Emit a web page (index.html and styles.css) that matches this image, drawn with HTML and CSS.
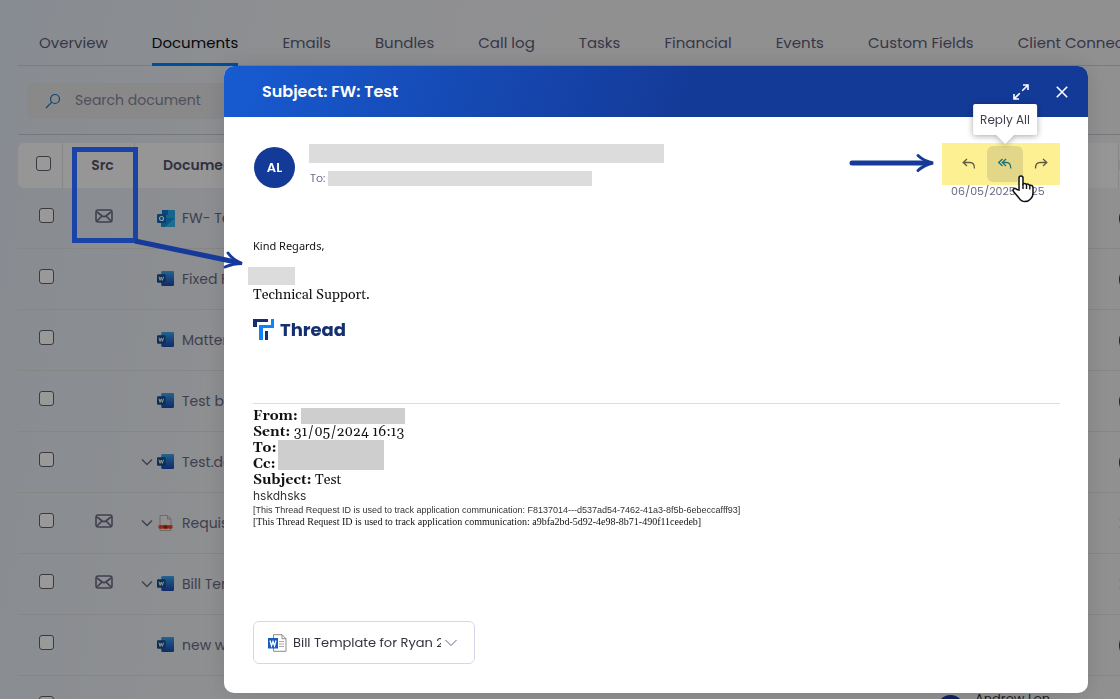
FILE: index.html
```html
<!DOCTYPE html>
<html lang="en">
<head>
    <meta charset="UTF-8">
    <meta name="viewport" content="width=device-width, initial-scale=1.0">
    <title>Matter Documents</title>
    <link rel="stylesheet" href="styles.css">
</head>
<body>
    <svg class="sprite" aria-hidden="true">
        <defs>
            <linearGradient id="word-fill" x1="0" y1="0" x2="0" y2="1">
                <stop offset="0%" stop-color="#41a5ee"></stop>
                <stop offset="40%" stop-color="#2b7cd3"></stop>
                <stop offset="100%" stop-color="#1b48b0"></stop>
            </linearGradient>
            <symbol id="mail" viewBox="0 0 18 14">
                <g fill="none" stroke="currentColor" stroke-width="1.6" stroke-linejoin="round">
                    <rect x="1" y="1" width="16" height="12" rx="2.2"></rect>
                    <path d="M2 3L7.200 7Q9 8.200 10.800 7L16 3M2.200 11.800L6.600 7.400M15.800 11.800L11.400 7.400"></path>
                </g>
            </symbol>
            <symbol id="word" viewBox="0 0 16 15">
                <rect x="4" y="0" width="12" height="14" rx="1" fill="url(#word-fill)"></rect>
                <rect x="0" y="3" width="8" height="8" rx="1" fill="#0f4f8f"></rect>
                <path d="M1.800 5.200L2.900 8.800L4 5.600L5.100 8.800L6.200 5.200" fill="none" stroke="#fff" stroke-width="0.900"></path>
            </symbol>
            <symbol id="outlook" viewBox="0 0 18 17">
                <rect x="5" y="0" width="13" height="10" rx="1" fill="#28a8ea"></rect>
                <rect x="5" y="0" width="6" height="5" fill="#0f78d4"></rect>
                <path d="M4 8L18 8V16Q18 17 17 17H5Q4 17 4 16Z" fill="#1490df"></path>
                <path d="M18 8L8 17H17Q18 17 18 16Z" fill="#35b8f1"></path>
                <rect x="0" y="4" width="9" height="9" rx="1" fill="#0f6cbd"></rect>
                <circle cx="4.500" cy="8.500" r="2" fill="none" stroke="#fff" stroke-width="1.200"></circle>
            </symbol>
            <symbol id="pdf" viewBox="0 0 14 16">
                <path d="M1.500 0.500H9L12.500 4V15.500H1.500Z" fill="#f2f0ee" stroke="#b5b2b0"></path>
                <path d="M9 0.500V4H12.500" fill="none" stroke="#b5b2b0"></path>
                <path d="M0 10.500Q2 9.500 4 10.300Q7 9 10 10.300Q12 9.500 14 10.500V13Q12 14.500 10 13.500Q7 15 4 13.500Q2 14.500 0 13Z" fill="#ee4423"></path>
                <ellipse cx="7" cy="12" rx="2" ry="1" fill="#8f2010"></ellipse>
            </symbol>
            <symbol id="chevron" viewBox="0 0 12 8">
                <path d="M1 1.500L6 6.500L11 1.500" fill="none" stroke="currentColor" stroke-width="1.500"></path>
            </symbol>
        </defs>
    </svg>

    <div class="page">
        <nav class="tabs">
            <a href="#">Overview</a>
            <a href="#" class="active">Documents</a>
            <a href="#">Emails</a>
            <a href="#">Bundles</a>
            <a href="#">Call log</a>
            <a href="#">Tasks</a>
            <a href="#">Financial</a>
            <a href="#">Events</a>
            <a href="#">Custom Fields</a>
            <a href="#">Client Connect</a>
        </nav>
        <div class="toolbar">
            <label class="search">
                <svg width="16" height="16" viewBox="0 0 16 16" fill="none" stroke="#0b79c8" stroke-width="1.200">
                    <circle cx="10" cy="6" r="4.500"></circle>
                    <path d="M6.800 9.200L1 15"></path>
                </svg>
                <input type="text" placeholder="Search document" aria-label="Search document">
            </label>
        </div>
        <div class="table-wrap">
            <table>
                <colgroup>
                    <col class="col-check">
                    <col class="col-src">
                    <col class="col-doc">
                    <col class="col-owner">
                    <col class="col-modified">
                </colgroup>
                <thead>
                    <tr>
                        <th><input type="checkbox" aria-label="Select all"></th>
                        <th class="src">Src</th>
                        <th class="doc-head">Document</th>
                        <th></th>
                        <th>Modified</th>
                    </tr>
                </thead>
                <tbody>
                    <tr>
                        <td><input type="checkbox" aria-label="Select FW- Test"></td>
                        <td class="src"><svg class="mail"><use href="#mail"></use></svg></td>
                        <td><div class="doc"><svg class="file outlook"><use href="#outlook"></use></svg>FW- Test</div></td>
                        <td></td>
                        <td><span class="user"></span></td>
                    </tr>
                    <tr>
                        <td><input type="checkbox" aria-label="Select Fixed Fee"></td>
                        <td></td>
                        <td><div class="doc"><svg class="file"><use href="#word"></use></svg>Fixed Fee</div></td>
                        <td></td>
                        <td><span class="user"></span></td>
                    </tr>
                    <tr>
                        <td><input type="checkbox" aria-label="Select Matter"></td>
                        <td></td>
                        <td><div class="doc"><svg class="file"><use href="#word"></use></svg>Matter</div></td>
                        <td></td>
                        <td><span class="user"></span></td>
                    </tr>
                    <tr>
                        <td><input type="checkbox" aria-label="Select Test bill"></td>
                        <td></td>
                        <td><div class="doc"><svg class="file"><use href="#word"></use></svg>Test bill</div></td>
                        <td></td>
                        <td><span class="user"></span></td>
                    </tr>
                    <tr>
                        <td><input type="checkbox" aria-label="Select Test.docx"></td>
                        <td></td>
                        <td><div class="doc"><svg class="chevron"><use href="#chevron"></use></svg><svg class="file"><use href="#word"></use></svg>Test.docx</div></td>
                        <td></td>
                        <td><span class="user"></span></td>
                    </tr>
                    <tr>
                        <td><input type="checkbox" aria-label="Select Requisition"></td>
                        <td class="src"><svg class="mail"><use href="#mail"></use></svg></td>
                        <td><div class="doc"><svg class="chevron"><use href="#chevron"></use></svg><svg class="file"><use href="#pdf"></use></svg>Requisition</div></td>
                        <td></td>
                        <td>2</td>
                    </tr>
                    <tr>
                        <td><input type="checkbox" aria-label="Select Bill Template"></td>
                        <td class="src"><svg class="mail"><use href="#mail"></use></svg></td>
                        <td><div class="doc"><svg class="chevron"><use href="#chevron"></use></svg><svg class="file"><use href="#word"></use></svg>Bill Template</div></td>
                        <td></td>
                        <td>2</td>
                    </tr>
                    <tr>
                        <td><input type="checkbox" aria-label="Select new word"></td>
                        <td></td>
                        <td><div class="doc"><svg class="file"><use href="#word"></use></svg>new word</div></td>
                        <td></td>
                        <td><span class="user"></span></td>
                    </tr>
                    <tr>
                        <td><input type="checkbox" aria-label="Select document"></td>
                        <td></td>
                        <td></td>
                        <td><div class="owner"><span class="user"></span><span class="owner-name">Andrew Lon</span></div></td>
                        <td></td>
                    </tr>
                </tbody>
            </table>
        </div>
    </div>

    <div class="overlay">
        <section class="modal" role="dialog" aria-labelledby="subject">
            <header class="modal-head">
                <h1 id="subject">Subject: FW: Test</h1>
                <button class="icon-btn" aria-label="Expand">
                    <svg width="16" height="16" viewBox="0 0 16 16" fill="none" stroke="#fff" stroke-width="1.600">
                        <path d="M10 1H15V6M15 1L9.200 6.800M6 15H1V10M1 15L6.800 9.200"></path>
                    </svg>
                </button>
                <button class="icon-btn" aria-label="Close">
                    <svg width="12" height="12" viewBox="0 0 12 12" fill="none" stroke="#fff" stroke-width="1.600">
                        <path d="M0.800 0.800L11.200 11.200M11.200 0.800L0.800 11.200"></path>
                    </svg>
                </button>
            </header>
            <div class="modal-body">
                <div class="mail-head">
                    <div class="avatar">AL</div>
                    <div class="people">
                        <div class="redact from-bar"></div>
                        <div class="to">To: <span class="redact to-bar"></span></div>
                    </div>
                    <div class="mail-side">
                        <svg class="point-arrow" width="86" height="20" viewBox="0 0 86 20" fill="none" stroke="#163a99" stroke-linecap="round">
                            <path d="M3 10H78" stroke-width="5"></path>
                            <path d="M69 2.500Q74 7.500 84 10Q74 12.500 69 17.500" stroke-width="3"></path>
                        </svg>
                        <div class="actions">
                            <button aria-label="Reply">
                                <svg width="14" height="12" viewBox="0 0 14 12" fill="none" stroke="#5f5a45" stroke-width="1.300">
                                    <path d="M5 1L1.200 4.500L5 8M1.200 4.500H8Q12.500 4.500 12.500 10.500"></path>
                                </svg>
                            </button>
                            <button class="hovered" aria-label="Reply All" aria-describedby="reply-all-tip">
                                <svg width="14" height="12" viewBox="0 0 14 12" fill="none" stroke="#1d7476" stroke-width="1.300">
                                    <path d="M4.500 1L0.800 4.500L4.500 8M8 1L4.300 4.500L8 8M4.300 4.500H8.500Q12.800 4.500 12.800 10.500"></path>
                                </svg>
                                <span class="tooltip" id="reply-all-tip" role="tooltip">Reply All</span>
                            </button>
                            <button aria-label="Forward">
                                <svg width="14" height="12" viewBox="0 0 14 12" fill="none" stroke="#5f5a45" stroke-width="1.300">
                                    <path d="M9 1L12.800 4.500L9 8M12.800 4.500H6Q1.500 4.500 1.500 10.500"></path>
                                </svg>
                            </button>
                        </div>
                        <time>06/05/2025 14:25</time>
                        <svg class="cursor" width="22" height="28" viewBox="0 0 22 28">
                            <path d="M7 15V3Q7 1 9 1Q11 1 11 3V9Q12.500 8 14.500 9.300Q16.300 8.600 17.500 10.300Q21 9.700 21 13V18Q21 22 18.500 24Q16.500 26.500 13 26.500Q9 26.500 7 23L1.500 16.500Q0.500 14.500 2 13.700Q3.500 13 5 14.500Z" fill="#fff" stroke="#111" stroke-width="1.500"></path>
                            <path d="M11 9V14M14.500 9.500V14M17.800 10.500V14.500" fill="none" stroke="#111" stroke-width="1.400"></path>
                        </svg>
                    </div>
                </div>

                <div class="message">
                    <p class="regards">Kind Regards,</p>
                    <div class="redact name-bar"></div>
                    <p class="role">Technical Support.</p>
                    <div class="logo">
                        <svg width="21" height="21" viewBox="0 0 21 21">
                            <path d="M0 0H15V3H4V8H0Z" fill="#16306f"></path>
                            <path d="M18 0H21V9H10V21H6V6H18Z" fill="#0a84ff"></path>
                            <path d="M12 12H15V21H12Z" fill="#16306f"></path>
                        </svg>
                        <span>Thread</span>
                    </div>
                    <hr>
                    <div class="quoted">
                        <div><b>From:</b> <span class="redact quoted-from"></span></div>
                        <div><b>Sent:</b> 31/05/2024 16:13</div>
                        <div class="recipients">
                            <div><b>To:</b><br><b>Cc:</b></div>
                            <span class="redact quoted-to"></span>
                        </div>
                        <div><b>Subject:</b> Test</div>
                        <div class="note">hskdhsks</div>
                        <div class="track">[This Thread Request ID is used to track application communication: F8137014---d537ad54-7462-41a3-8f5b-6ebeccafff93]</div>
                        <div class="track-serif">[This Thread Request ID is used to track application communication: a9bfa2bd-5d92-4e98-8b71-490f11ceedeb]</div>
                    </div>
                </div>

                <button class="attachment">
                    <svg width="19" height="18" viewBox="0 0 19 18">
                        <path d="M5.500 0.700H14L18 4.700V17.300H5.500Z" fill="#fff" stroke="#8c8c8c"></path>
                        <path d="M14 0.700V4.700H18" fill="none" stroke="#8c8c8c"></path>
                        <path d="M11 7.500H16M11 10H16M11 12.500H16" stroke="#a9a9a9"></path>
                        <rect x="0" y="4" width="10" height="10.500" fill="#185abd"></rect>
                        <path d="M2 6.500L3.500 11.800L5 7.500L6.500 11.800L8 6.500" fill="none" stroke="#fff" stroke-width="1.300"></path>
                    </svg>
                    <span class="attachment-name">Bill Template for Ryan 2024.docx</span>
                    <svg class="chevron" viewBox="0 0 12 8"><path d="M0.500 1L6 6.500L11.500 1" fill="none" stroke="currentColor"></path></svg>
                </button>
            </div>
        </section>
    </div>

    <div class="src-highlight"></div>
    <svg class="src-arrow" width="112" height="36" viewBox="0 0 112 36" fill="none" stroke="#163a99">
        <path d="M2 4L105 25.500" stroke-width="5"></path>
        <path d="M95 16Q100 23 109 26.500Q100 26.500 92 30" stroke-width="3" stroke-linecap="round"></path>
    </svg>
</body>
</html>
```
FILE: styles.css
```css
* {
    box-sizing: border-box;
}
html, body {
    height: 100%;
    margin: 0;
    overflow: hidden;
}
body {
    font-family: Poppins, Inter, sans-serif;
    font-size: 14px;
    color: #6b6a85;
    background: linear-gradient(100deg, #e2eaf3 0%, #ebeef2 22%, #f0f0f2 45%, #f0f0f2 100%);
}
h1, p {
    margin: 0;
}
button {
    font-family: inherit;
    cursor: pointer;
}
.sprite {
    position: absolute;
    width: 0;
    height: 0;
}

/* page behind the dialog */
.page {
    padding-left: 18px;
}
.tabs {
    display: flex;
    gap: 44px;
    height: 66px;
    padding: 20px 0 0 21px;
    border-bottom: 1px solid #cdced6;
    white-space: nowrap;
}
.tabs a {
    height: 46px;
    line-height: 46px;
    color: #5c5b76;
    font-size: 15px;
    text-decoration: none;
}
.tabs a.active {
    color: #0c0c14;
    border-bottom: 3px solid #0085ff;
}
.toolbar {
    height: 69px;
    padding: 17px 0 0 9px;
    border-bottom: 1px solid #c6c6d2;
}
.search {
    display: flex;
    align-items: center;
    gap: 12px;
    width: 400px;
    height: 36px;
    padding-left: 18px;
    border-radius: 4px;
    background: #e4e4e7;
}
.search input {
    padding: 0 2px 2px;
    border: 0;
    background: none;
    font: inherit;
}
.search input::placeholder {
    color: #85859a;
}
.table-wrap {
    margin-top: 8px;
    overflow: hidden;
}
table {
    width: 100%;
    min-width: 1281px;
    table-layout: fixed;
    border-collapse: separate;
    border-spacing: 0;
}
.col-check { width: 45px; }
.col-src { width: 72px; }
.col-owner { width: 182px; }
.col-modified { width: 180px; }
th, td {
    padding: 0;
    text-align: left;
}
th {
    height: 45px;
    background: #fafafa;
    color: #55546a;
    font-weight: 600;
    border-right: 1px solid #e2e2e8;
}
th:first-child {
    padding: 0 0 5px 18px;
    border-radius: 6px 0 0 6px;
}
.doc-head {
    padding-left: 28px;
}
td {
    height: 61px;
    border-bottom: 1px solid #e0dfdd;
}
td:first-child {
    padding: 0 0 5px 21px;
}
input[type="checkbox"] {
    appearance: none;
    display: block;
    width: 15px;
    height: 15px;
    margin: 0;
    border: 1px solid #62626c;
    border-radius: 3px;
    background: #fff;
}
.src {
    text-align: center;
}
th.src {
    padding-left: 8px;
}
td.src {
    padding: 0 0 4px 10px;
}
.mail {
    display: block;
    width: 18px;
    height: 14px;
    margin: 0 auto;
}
.doc {
    display: flex;
    align-items: center;
    padding-left: 6px;
}
.doc .file {
    width: 17px;
    height: 16px;
    margin-right: 8px;
}
.doc .file:first-child {
    margin-left: 16px;
}
.doc .outlook {
    width: 18px;
    height: 17px;
    margin-right: 7px;
}
.chevron {
    width: 12px;
    height: 8px;
    margin-right: 4px;
}
.user {
    display: block;
    flex: none;
    width: 27px;
    height: 27px;
    border-radius: 50%;
    background: #16389b;
}
.owner {
    display: flex;
    align-items: flex-end;
    gap: 11px;
}
.owner-name {
    height: 32px;
    color: #33323f;
    font-size: 13px;
    line-height: 18px;
}

/* dialog */
.overlay {
    position: fixed;
    inset: 0;
    display: flex;
    padding: 66px 32px 6px 224px;
    background: rgba(0, 0, 0, 0.4);
}
.modal {
    display: flex;
    flex: 1;
    flex-direction: column;
    min-width: 0;
    border-radius: 10px;
    background: #fff;
    box-shadow: 0 0 24px rgba(0, 0, 0, 0.12);
}
.modal-head {
    display: flex;
    align-items: center;
    gap: 27px;
    height: 51px;
    padding: 0 20px 0 38px;
    border-radius: 10px 10px 0 0;
    background: linear-gradient(110deg, #175bd2 0%, #143a98 54%);
}
.modal-head h1 {
    flex: 1;
    color: #fff;
    font-size: 16px;
    font-weight: 600;
}
.icon-btn {
    display: flex;
    padding: 0;
    border: 0;
    background: none;
}
.modal-body {
    display: flex;
    flex: 1;
    flex-direction: column;
    padding: 26px 28px 29px 29px;
}
.redact {
    display: block;
    background: #dcdcdd;
}
.mail-head {
    display: flex;
    height: 95px;
}
.avatar {
    width: 41px;
    height: 41px;
    margin: 4px 14px 0 1px;
    border-radius: 50%;
    background: #143a98;
    color: #fff;
    font-size: 13px;
    font-weight: 600;
    line-height: 41px;
    text-align: center;
}
.people {
    flex: 1;
}
.from-bar {
    max-width: 355px;
    height: 19px;
    margin-top: 1px;
}
.to {
    display: flex;
    align-items: center;
    gap: 3px;
    margin-top: 8px;
    padding-left: 1px;
    font-size: 11px;
    line-height: 15px;
}
.to-bar {
    width: 264px;
    height: 15px;
}
.mail-side {
    position: relative;
    width: 118px;
}
.actions {
    display: flex;
    padding: 3px 9px;
    background: #fdf092;
}
.actions button {
    position: relative;
    display: flex;
    flex: none;
    align-items: center;
    justify-content: center;
    width: 36px;
    height: 36px;
    padding: 0;
    border: 0;
    border-radius: 6px;
    background: none;
}
.actions .hovered {
    background: #e2d789;
}
.tooltip {
    position: absolute;
    bottom: 47px;
    left: 50%;
    padding: 0 7px;
    border-radius: 2px;
    background: #fff;
    color: #3f3e4d;
    font-size: 12px;
    line-height: 31px;
    white-space: nowrap;
    transform: translateX(-50%);
    filter: drop-shadow(0 1px 3px rgba(0, 0, 0, 0.35));
}
.tooltip::after {
    content: "";
    position: absolute;
    top: 100%;
    left: 50%;
    margin-left: -9px;
    border: 9px solid transparent;
    border-top-color: #fff;
    border-bottom: 0;
}
.mail-side time {
    display: block;
    padding-left: 9px;
    font-size: 11px;
    line-height: 13px;
    white-space: nowrap;
}
.point-arrow {
    position: absolute;
    top: 10px;
    right: 125px;
}
.cursor {
    position: absolute;
    top: 32px;
    left: 70px;
}

/* message text */
.message {
    flex: 1;
    color: #111;
    font-family: Georgia, Gelasio, "Liberation Serif", serif;
    font-size: 14px;
    line-height: 16px;
}
.regards {
    font-family: "Noto Sans", sans-serif;
    font-size: 11px;
}
.name-bar {
    width: 47px;
    height: 18px;
    margin: 13px 0 0 -5px;
}
.role {
    margin-top: 2px;
}
.logo {
    display: flex;
    align-items: center;
    gap: 6px;
    height: 21px;
    margin-top: 16px;
    color: #16306f;
    font-family: Poppins, Inter, sans-serif;
    font-size: 18px;
    font-weight: 700;
}
hr {
    height: 1px;
    margin: 63px 0 4px;
    border: 0;
    background: #dedede;
}
.quoted-from {
    display: inline-block;
    width: 104px;
    height: 16px;
    background: #cecece;
    vertical-align: top;
}
.recipients {
    display: flex;
    gap: 1px;
}
.quoted-to {
    width: 106px;
    height: 30px;
    background: #cecece;
}
.note {
    color: #333;
    font-family: Inter, sans-serif;
    font-size: 12px;
}
.track {
    color: #333;
    font-family: "Liberation Sans", sans-serif;
    font-size: 9px;
    line-height: 12px;
}
.track-serif {
    font-family: "Liberation Serif", serif;
    font-size: 10px;
    line-height: 12px;
}
.attachment {
    display: flex;
    align-items: center;
    width: 222px;
    height: 43px;
    padding: 0 14px;
    border: 1px solid #d6d5ea;
    border-radius: 6px;
    background: #fff;
    color: #33323f;
    font-size: 13px;
    text-align: left;
}
.attachment-name {
    flex: 1;
    margin: 0 4px 0 6px;
    overflow: hidden;
    white-space: nowrap;
}
.attachment .chevron {
    margin-right: 3px;
    color: #66658a;
}

/* callouts over the page */
.src-highlight {
    position: absolute;
    top: 147px;
    left: 72px;
    width: 66px;
    height: 96px;
    border: 5px solid #1a43a8;
}
.src-arrow {
    position: absolute;
    top: 237px;
    left: 133px;
}
```
